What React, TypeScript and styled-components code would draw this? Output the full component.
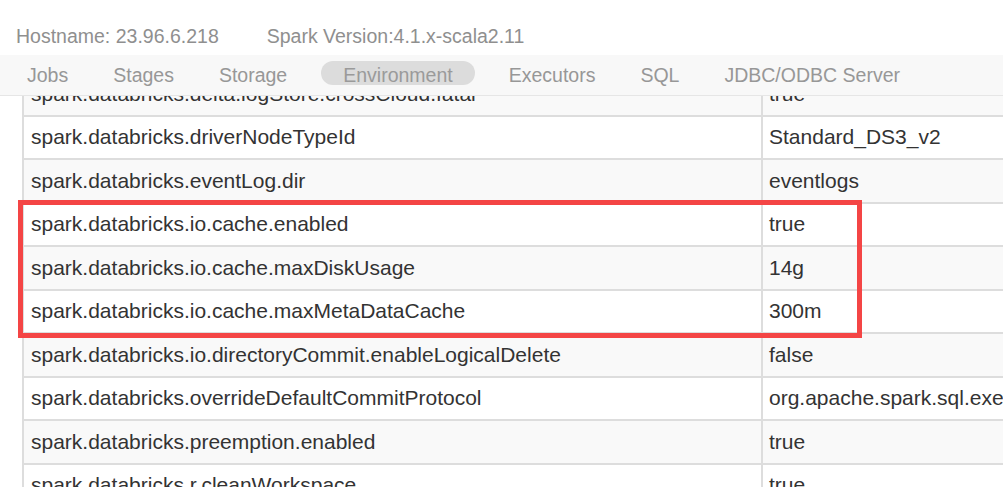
import React from "react";
import styled, { createGlobalStyle } from "styled-components";

const Global = createGlobalStyle`
  html, body { margin: 0; padding: 0; background: #fff; overflow: hidden; }
  body { font-family: "Liberation Sans", Arial, Helvetica, sans-serif; }
  * { box-sizing: border-box; }
`;

const Page = styled.div`
  width: 1003px;
  height: 487px;
  display: flex;
  flex-direction: column;
  overflow: hidden;
  position: relative;
`;

const Header = styled.header`
  height: 55px;
  padding: 25px 0 0 16px;
  display: flex;
  gap: 48px;
  font-size: 19.5px;
  color: #8f8f8f;
  white-space: nowrap;
`;

const NavBar = styled.nav`
  height: 41px;
  padding: 6px 0 0 5px;
  background: #f8f8f8;
  border-bottom: 1px solid #e6e6e6;
  display: flex;
  align-items: flex-start;
  gap: 1px;
  position: relative;
  z-index: 2;
`;

const NavItem = styled.div<{ $active?: boolean }>`
  height: 24px;
  padding: 3px 22px 0;
  margin: ${(p) => (p.$active ? "0 11px" : "0")};
  line-height: 22px;
  font-size: 19.5px;
  white-space: nowrap;
  color: ${(p) => (p.$active ? "#9a9a9a" : "#979797")};
  background: ${(p) => (p.$active ? "#dcdcdc" : "transparent")};
  border-radius: 12px;
`;

const Viewport = styled.div`
  flex: 1;
  overflow: hidden;
  position: relative;
  padding-left: 22px;
`;

const Table = styled.div`
  width: 1400px;
  margin-top: -23px;
  font-size: 21px;
  color: #333;
`;

const Row = styled.div<{ $striped: boolean }>`
  display: grid;
  grid-template-columns: 739px 1fr;
  height: 43.5px;
  border-bottom: 2px solid #dddddd;
  border-left: 2px solid #dddddd;
  background: ${(p) => (p.$striped ? "#f9f9f9" : "#ffffff")};
`;

const Cell = styled.div<{ $divider?: boolean }>`
  display: flex;
  align-items: center;
  padding: 0 6px 0 ${(p) => (p.$divider ? "7px" : "6px")};
  white-space: nowrap;
  overflow: hidden;
  ${(p) => (p.$divider ? "border-right: 2px solid #dddddd;" : "")}
`;

const Highlight = styled.div`
  position: absolute;
  left: 18px;
  top: 200px;
  width: 844px;
  height: 138px;
  border: 5px solid #f44545;
  pointer-events: none;
  z-index: 3;
`;

const rows: [string, string][] = [
  ["spark.databricks.delta.logStore.crossCloud.fatal", "true"],
  ["spark.databricks.driverNodeTypeId", "Standard_DS3_v2"],
  ["spark.databricks.eventLog.dir", "eventlogs"],
  ["spark.databricks.io.cache.enabled", "true"],
  ["spark.databricks.io.cache.maxDiskUsage", "14g"],
  ["spark.databricks.io.cache.maxMetaDataCache", "300m"],
  ["spark.databricks.io.directoryCommit.enableLogicalDelete", "false"],
  [
    "spark.databricks.overrideDefaultCommitProtocol",
    "org.apache.spark.sql.execution.datasources.SQLHadoopMapReduceCommitProtocol",
  ],
  ["spark.databricks.preemption.enabled", "true"],
  ["spark.databricks.r.cleanWorkspace", "true"],
  ["spark.databricks.redactor", "com.databricks.spark.util.DatabricksSparkLogRedactorProxy"],
];

const tabs = ["Jobs", "Stages", "Storage", "Environment", "Executors", "SQL", "JDBC/ODBC Server"];

export default function App() {
  return (
    <>
      <Global />
      <Page>
        <Header>
          <span>Hostname: 23.96.6.218</span>
          <span>Spark Version:4.1.x-scala2.11</span>
        </Header>
        <NavBar>
          {tabs.map((t) => (
            <NavItem key={t} $active={t === "Environment"}>
              {t}
            </NavItem>
          ))}
        </NavBar>
        <Viewport>
          <Table>
            {rows.map(([k, v], i) => (
              <Row key={k} $striped={i % 2 === 0}>
                <Cell $divider>{k}</Cell>
                <Cell>{v}</Cell>
              </Row>
            ))}
          </Table>
        </Viewport>
        <Highlight />
      </Page>
    </>
  );
}
